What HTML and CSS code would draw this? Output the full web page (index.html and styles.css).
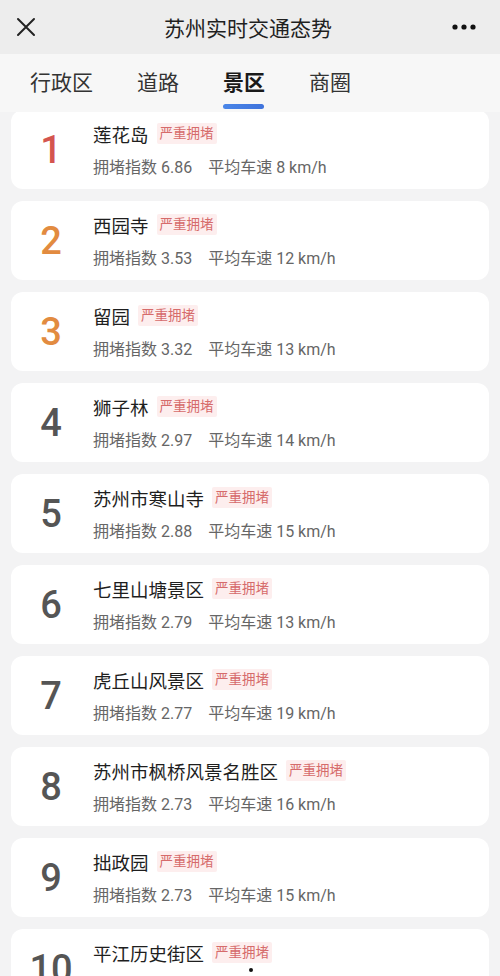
FILE: index.html
```html
<!DOCTYPE html>
<html lang="zh">
<head>
<meta charset="utf-8">
<title>苏州实时交通态势</title>
<link rel="stylesheet" href="styles.css">
</head>
<body>
<div class="page">
  <header class="topbar">
    <svg class="icon-close" width="20" height="20" viewBox="0 0 20 20"><path d="M2 2 L18 18 M18 2 L2 18" stroke="#222" stroke-width="2" stroke-linecap="round" fill="none"/></svg>
    <div class="title">苏州实时交通态势</div>
    <svg class="icon-more" width="24" height="6" viewBox="0 0 24 6"><circle cx="3" cy="3" r="2.6" fill="#111"/><circle cx="12" cy="3" r="2.6" fill="#111"/><circle cx="21" cy="3" r="2.6" fill="#111"/></svg>
  </header>
  <nav class="tabs">
    <div class="tab">行政区</div>
    <div class="tab">道路</div>
    <div class="tab active">景区</div>
    <div class="tab">商圈</div>
  </nav>
  <main class="list">
    <div class="card"><div class="num n1">1</div><div class="info"><div class="name-row"><span class="name">莲花岛</span><span class="badge">严重拥堵</span></div><div class="meta"><span>拥堵指数 6.86</span><span>平均车速 8 km/h</span></div></div></div>
    <div class="card"><div class="num n2">2</div><div class="info"><div class="name-row"><span class="name">西园寺</span><span class="badge">严重拥堵</span></div><div class="meta"><span>拥堵指数 3.53</span><span>平均车速 12 km/h</span></div></div></div>
    <div class="card"><div class="num n2">3</div><div class="info"><div class="name-row"><span class="name">留园</span><span class="badge">严重拥堵</span></div><div class="meta"><span>拥堵指数 3.32</span><span>平均车速 13 km/h</span></div></div></div>
    <div class="card"><div class="num">4</div><div class="info"><div class="name-row"><span class="name">狮子林</span><span class="badge">严重拥堵</span></div><div class="meta"><span>拥堵指数 2.97</span><span>平均车速 14 km/h</span></div></div></div>
    <div class="card"><div class="num">5</div><div class="info"><div class="name-row"><span class="name">苏州市寒山寺</span><span class="badge">严重拥堵</span></div><div class="meta"><span>拥堵指数 2.88</span><span>平均车速 15 km/h</span></div></div></div>
    <div class="card"><div class="num">6</div><div class="info"><div class="name-row"><span class="name">七里山塘景区</span><span class="badge">严重拥堵</span></div><div class="meta"><span>拥堵指数 2.79</span><span>平均车速 13 km/h</span></div></div></div>
    <div class="card"><div class="num">7</div><div class="info"><div class="name-row"><span class="name">虎丘山风景区</span><span class="badge">严重拥堵</span></div><div class="meta"><span>拥堵指数 2.77</span><span>平均车速 19 km/h</span></div></div></div>
    <div class="card"><div class="num">8</div><div class="info"><div class="name-row"><span class="name">苏州市枫桥风景名胜区</span><span class="badge">严重拥堵</span></div><div class="meta"><span>拥堵指数 2.73</span><span>平均车速 16 km/h</span></div></div></div>
    <div class="card"><div class="num">9</div><div class="info"><div class="name-row"><span class="name">拙政园</span><span class="badge">严重拥堵</span></div><div class="meta"><span>拥堵指数 2.73</span><span>平均车速 15 km/h</span></div></div></div>
    <div class="card"><div class="num">10</div><div class="info"><div class="name-row"><span class="name">平江历史街区</span><span class="badge">严重拥堵</span></div><div class="meta"><span>拥堵指数 2.70</span><span>平均车速 16 km/h</span></div></div></div>
  </main>
  <div class="dot"></div>
</div>
</body>
</html>
```
FILE: styles.css
```css
* { box-sizing: border-box; }
html, body { margin: 0; padding: 0; }
body {
  width: 500px;
  height: 976px;
  overflow: hidden;
  background: #f3f3f4;
  font-family: "Roboto", "Noto Sans CJK SC", sans-serif;
  color: #222;
}
.page { position: relative; height: 976px; overflow: hidden; }
.topbar {
  height: 54px;
  background: #ededed;
  display: flex;
  align-items: center;
  justify-content: space-between;
  padding: 0 24px 0 16px;
}
.icon-close { display: block; }
.title {
  font-size: 21px;
  color: #1f1f1f;
  margin-left: 8px;
}
.icon-more { display: block; }
.tabs {
  height: 58px;
  background: #f7f7f7;
  display: flex;
  align-items: flex-start;
  padding: 15px 0 0 30px;
  gap: 44px;
  position: relative;
  z-index: 1;
}
.tab {
  position: relative;
  font-size: 21px;
  line-height: 28px;
  color: #333;
}
.tab.active { font-weight: 700; color: #1a1a1a; }
.tab.active::after {
  content: "";
  position: absolute;
  left: 0;
  right: 1px;
  top: 35px;
  height: 5px;
  border-radius: 3px;
  background: linear-gradient(90deg, #4a86e8, #3f73dc);
}
.list {
  display: flex;
  flex-direction: column;
  gap: 12px;
  padding: 0 11px;
  margin-top: -2px;
}
.card {
  height: 79px;
  background: #fff;
  border-radius: 12px;
  display: flex;
  align-items: center;
}
.num {
  width: 80px;
  flex: none;
  text-align: center;
  font-size: 38px;
  font-weight: 500;
  color: #555;
  line-height: 1;
}
.num.n1 { color: #d4554f; }
.num.n2 { color: #e28b40; }
.info {
  margin-left: 2px;
  display: flex;
  flex-direction: column;
  gap: 10px;
}
.name-row { display: flex; align-items: center; gap: 8px; height: 26px; }
.name { font-size: 18.5px; color: #1e1e1e; }
.badge {
  font-size: 13.5px;
  line-height: 21px;
  padding: 0 3px;
  color: #d66b6b;
  background: #fdeeee;
  border-radius: 2px;
}
.meta {
  display: flex;
  gap: 16px;
  font-size: 16px;
  color: #666;
  line-height: 22px;
}
.dot {
  position: absolute;
  left: 249px;
  top: 968px;
  width: 4px;
  height: 4px;
  border-radius: 50%;
  background: #111;
}
```
